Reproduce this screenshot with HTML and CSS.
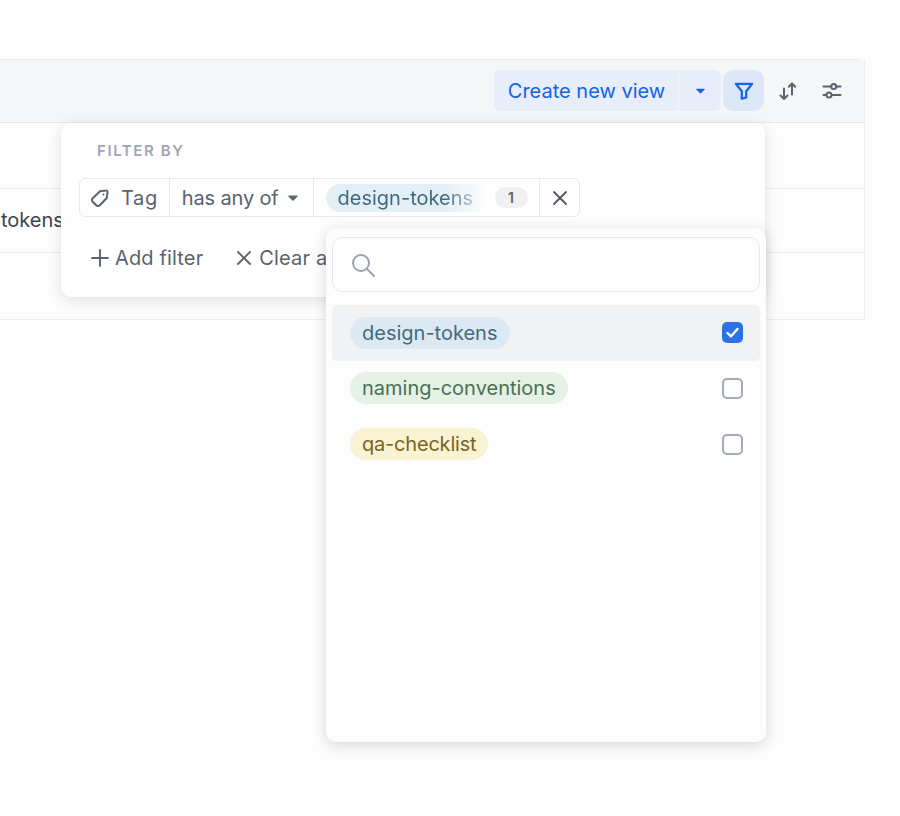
FILE: index.html
```html
<!DOCTYPE html>
<html lang="en">
<head>
<meta charset="utf-8">
<title>Filter by tag</title>
<link rel="stylesheet" href="styles.css">
</head>
<body>
<div class="table">
  <div class="toolbar">
    <div class="split">
      <span class="create">Create new view</span>
      <span class="caret-btn"><svg class="caret" viewBox="0 0 10 6"><path d="M.8.4h8.400a.6.6 0 0 1 .4 1L5.500 5.400a.7.7 0 0 1-1 0L.4 1.400a.6.6 0 0 1 .4-1z" fill="#1463e6"/></svg></span>
    </div>
    <span class="filter-btn"><svg class="ic20" viewBox="0 0 20 20" fill="none" stroke="#1463e6" stroke-width="2.200" stroke-linejoin="round" stroke-linecap="round"><path d="M1.800 2.800h16.400l-6 7.400v6.300l-4.400 1.300v-7.600z"/></svg></span>
    <span class="icon-btn"><svg class="ic20" viewBox="0 0 20 20" fill="none" stroke="#5b6270" stroke-width="2" stroke-linecap="round" stroke-linejoin="round"><path d="M6 7.500V18M2.500 14.500L6 18l3.500-3.500M14 13.500V2.500M10.800 5.800L14 2.500l3.200 3.300"/></svg></span>
    <span class="icon-btn"><svg class="ic20" viewBox="0 0 20 20" fill="none" stroke="#5b6270" stroke-width="2" stroke-linecap="round"><path d="M1.500 5.500h7M15 5.500h3.500M1.500 14h2.500M10.500 14h8"/><circle cx="11.700" cy="5.500" r="2.500"/><circle cx="7" cy="14" r="2.500"/></svg></span>
  </div>
  <div class="row row-a"></div>
  <div class="row row-b"><span class="cell-text">tokens</span></div>
  <div class="row row-c"></div>
</div>

<section class="panel">
  <h2 class="panel-title">FILTER BY</h2>
  <div class="filter-row">
    <span class="seg seg-tag"><svg class="tag-ic" viewBox="0 0 20 20" fill="none" stroke="#5b6270" stroke-width="2" stroke-linejoin="round"><path d="M10 3.200L16 2.500A1.300 1.300 0 0 1 17.500 4L16.800 10 9.800 17.300A2.500 2.500 0 0 1 6.200 17.300L2.700 13.800A2.500 2.500 0 0 1 2.700 10.200z"/><circle cx="13.500" cy="6.500" r=".6" fill="#5b6270" stroke-width="1"/></svg>Tag</span>
    <span class="seg seg-op">has any of<svg class="caret-small" viewBox="0 0 10 6"><path d="M.8.4h8.400a.6.6 0 0 1 .4 1L5.500 5.400a.7.7 0 0 1-1 0L.4 1.400a.6.6 0 0 1 .4-1z" fill="#5b6270"/></svg></span>
    <span class="seg seg-val"><span class="chip-fade">design-tokens</span><span class="count">1</span></span>
    <span class="seg seg-x"><svg class="x-ic" viewBox="0 0 16 16" fill="none" stroke="#4f5665" stroke-width="1.800" stroke-linecap="round"><path d="M2 2l12 12M14 2L2 14"/></svg></span>
  </div>
  <div class="panel-actions">
    <span class="action"><svg class="plus-ic" viewBox="0 0 18 18" fill="none" stroke="#5b6270" stroke-width="1.900" stroke-linecap="round"><path d="M9 1v16M1 9h16"/></svg>Add filter</span>
    <span class="action"><svg class="x-small" viewBox="0 0 16 16" fill="none" stroke="#5b6270" stroke-width="1.800" stroke-linecap="round"><path d="M2 2l12 12M14 2L2 14"/></svg>Clear all</span>
  </div>
</section>

<section class="menu">
  <div class="search"><svg class="search-ic" viewBox="0 0 24 24" fill="none" stroke="#9aa1b0" stroke-width="2" stroke-linecap="round"><circle cx="10" cy="10" r="8"/><path d="M16 16l7 7"/></svg></div>
  <ul class="options">
    <li class="option selected"><span class="pill pill-blue">design-tokens</span><span class="check on"><svg viewBox="0 0 21 21" fill="none" stroke="#fff" stroke-width="2.400" stroke-linecap="round" stroke-linejoin="round"><path d="M5.500 11l3.500 3.300L15.500 7"/></svg></span></li>
    <li class="option"><span class="pill pill-green">naming-conventions</span><span class="check"></span></li>
    <li class="option"><span class="pill pill-yellow">qa-checklist</span><span class="check"></span></li>
  </ul>
</section>
</body>
</html>
```
FILE: styles.css
```css
* { box-sizing: border-box; }
html, body { margin: 0; padding: 0; }
body {
  width: 900px;
  height: 816px;
  overflow: hidden;
  position: relative;
  padding-top: 59px;
  background: #fdfdfd;
  font-family: Inter, "Liberation Sans", sans-serif;
  color: #3d4350;
}
.table {
  width: 865px;
  border-right: 1px solid #eceef1;
}
.toolbar {
  height: 64px;
  background: #f5f6f8;
  border-top: 1px solid #eceef1;
  border-bottom: 1px solid #e6e8ec;
  border-top-right-radius: 6px;
  display: flex;
  align-items: center;
  justify-content: flex-end;
  padding: 0 10px 1px 0;
}
.split { display: flex; gap: 1px; height: 41px; margin-right: 2px; }
.create {
  width: 184px;
  padding-left: 1px;
  background: #e7edf9;
  border-radius: 6px 0 0 6px;
  color: #1463e6;
  font-size: 20px;
  line-height: 43px;
  text-align: center;
}
.caret-btn {
  width: 42px;
  background: #e7edf9;
  border-radius: 0 6px 6px 0;
  display: flex;
  align-items: center;
  justify-content: center;
}
.caret { width: 9px; height: 6px; }
.filter-btn {
  width: 41px;
  height: 41px;
  margin-right: 2px;
  border-radius: 10px;
  background: #dce6f7;
  display: flex;
  align-items: center;
  justify-content: center;
}
.icon-btn {
  width: 44px;
  height: 41px;
  display: flex;
  align-items: center;
  justify-content: center;
}
.ic20 { width: 20px; height: 20px; }
.row { border-bottom: 1px solid #eceef1; }
.row-a { height: 66px; }
.row-b { height: 64px; display: flex; align-items: center; padding: 0 0 1px 1px; }
.row-c { height: 67px; }
.cell-text {
  font-size: 20px;
  color: #3d4350;
  white-space: nowrap;
}
.panel {
  position: absolute;
  left: 61px;
  top: 123px;
  width: 704px;
  height: 174px;
  background: #fefefe;
  border-radius: 10px;
  box-shadow: 0 3px 14px rgba(30, 40, 60, .14);
  padding: 19px 18px 0;
}
.panel-title {
  margin: 0 0 0 18px;
  font-size: 15px;
  line-height: 18px;
  font-weight: 600;
  letter-spacing: 1.6px;
  color: #9ea5b5;
}
.filter-row {
  display: flex;
  width: 501px;
  height: 39px;
  margin-top: 18px;
  border: 1px solid #e6e8ec;
  border-radius: 6px;
  font-size: 20px;
  color: #5b6270;
}
.seg {
  display: flex;
  align-items: center;
  border-right: 1px solid #e6e8ec;
}
.seg-tag { width: 90px; padding-left: 10px; gap: 11px; letter-spacing: .6px; }
.tag-ic { width: 20px; height: 20px; }
.seg-op { width: 144px; padding-left: 12px; gap: 9px; letter-spacing: -.15px; }
.caret-small { width: 10px; height: 6px; }
.seg-val { width: 227px; padding-left: 12px; position: relative; }
.seg-x { width: 39px; border-right: 0; justify-content: center; }
.x-ic { width: 16px; height: 16px; }
.chip-fade {
  width: 164px;
  height: 28px;
  line-height: 28px;
  padding-left: 12px;
  border-radius: 14px;
  white-space: nowrap;
  overflow: hidden;
  color: #3f6b80;
  background: #e4eff5;
  -webkit-mask-image: linear-gradient(to right, #000 72%, transparent 100%);
  mask-image: linear-gradient(to right, #000 72%, transparent 100%);
}
.count {
  margin-left: 5px;
  width: 33px;
  height: 21px;
  border-radius: 11px;
  background: #f0f0f2;
  color: #5b6270;
  font-size: 14px;
  font-weight: 600;
  line-height: 21px;
  text-align: center;
}
.panel-actions {
  display: flex;
  gap: 33px;
  margin-top: 28px;
  padding-left: 12px;
  font-size: 20px;
  line-height: 26px;
  color: #5b6270;
  letter-spacing: .15px;
}
.action { display: flex; align-items: center; gap: 6px; white-space: nowrap; }
.plus-ic { width: 18px; height: 18px; }
.x-small { width: 16px; height: 16px; margin-right: 1px; }
.menu {
  position: absolute;
  left: 326px;
  top: 228px;
  width: 440px;
  height: 514px;
  background: #fdfdfd;
  border-radius: 10px;
  box-shadow: 0 3px 14px rgba(30, 40, 60, .18);
  padding: 9px 6px 0;
}
.search {
  height: 55px;
  border: 1px solid #e6e8ec;
  border-radius: 10px;
  display: flex;
  align-items: center;
  padding-left: 18px;
}
.search-ic { width: 24px; height: 24px; }
.options { list-style: none; margin: 13px 0 0; padding: 0; }
.option {
  height: 55.67px;
  display: flex;
  align-items: center;
  justify-content: space-between;
  padding: 0 17px 0 18px;
  border-radius: 5px;
  font-size: 20px;
}
.selected { background: #f1f2f4; }
.pill {
  height: 32px;
  line-height: 32px;
  padding: 0 12px;
  border-radius: 16px;
  white-space: nowrap;
}
.pill-blue { background: #dde9f2; color: #3f6b80; }
.pill-green { background: #e5f0e6; color: #4a7052; }
.pill-yellow { background: #f9f2d3; color: #7a6420; letter-spacing: -.2px; }
.check {
  width: 21px;
  height: 21px;
  border: 2px solid #a4aab8;
  border-radius: 5px;
  display: block;
}
.check svg { display: block; width: 21px; height: 21px; }
.check.on { border: 0; background: #2b73e6; }
```
